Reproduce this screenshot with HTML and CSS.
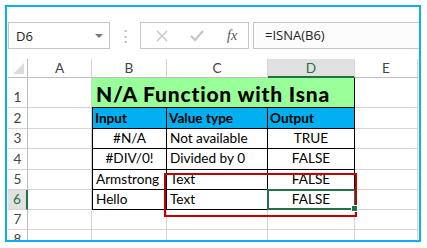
FILE: index.html
```html
<!DOCTYPE html>
<html lang="en">
<head>
    <meta charset="UTF-8">
    <title>ISNA</title>
    <link rel="stylesheet" href="styles.css">
</head>
<body>
    <div class="frame">
        <div class="toolbar">
            <div class="namebox">
                <span>D6</span>
                <span class="caret"></span>
            </div>
            <div class="dots">⋮</div>
            <div class="buttons">
                <svg width="14" height="14" viewBox="0 0 14 14"><path d="M2 2 L12 12 M12 2 L2 12" stroke="#c4c4c4" stroke-width="1.4" fill="none"/></svg>
                <svg width="16" height="14" viewBox="0 0 16 14"><path d="M2 7 L6 11 L14 2" stroke="#c4c4c4" stroke-width="2" fill="none"/></svg>
                <span class="fx">fx</span>
            </div>
            <div class="formula">=ISNA(B6)</div>
        </div>

        <div class="sheet">
            <div class="corner"><span class="tri"></span></div>
            <div class="colhead">A</div>
            <div class="colhead">B</div>
            <div class="colhead">C</div>
            <div class="colhead active">D</div>
            <div class="colhead">E</div>

            <div class="rowhead r1">1</div>
            <div class="cell"></div>
            <div class="cell title">N/A Function with Isna</div>
            <div class="cell"></div>

            <div class="rowhead r2">2</div>
            <div class="cell"></div>
            <div class="cell head bl">Input</div>
            <div class="cell head">Value type</div>
            <div class="cell head">Output</div>
            <div class="cell"></div>

            <div class="rowhead">3</div>
            <div class="cell"></div>
            <div class="cell data bl center">#N/A</div>
            <div class="cell data">Not available</div>
            <div class="cell data center">TRUE</div>
            <div class="cell"></div>

            <div class="rowhead r4">4</div>
            <div class="cell"></div>
            <div class="cell data bl center">#DIV/0!</div>
            <div class="cell data">Divided by 0</div>
            <div class="cell data center">FALSE</div>
            <div class="cell"></div>

            <div class="rowhead">5</div>
            <div class="cell"></div>
            <div class="cell data bl">Armstrong</div>
            <div class="cell data">Text</div>
            <div class="cell data center">FALSE</div>
            <div class="cell"></div>

            <div class="rowhead active">6</div>
            <div class="cell"></div>
            <div class="cell data bl">Hello</div>
            <div class="cell data">Text</div>
            <div class="cell data center selected">FALSE<span class="handle"></span></div>
            <div class="cell"></div>

            <div class="rowhead">7</div>
            <div class="cell"></div>
            <div class="cell"></div>
            <div class="cell"></div>
            <div class="cell"></div>
            <div class="cell"></div>

            <div class="rowhead">8</div>
            <div class="cell"></div>
            <div class="cell"></div>
            <div class="cell"></div>
            <div class="cell"></div>
            <div class="cell"></div>

            <div class="redbox"></div>
        </div>
    </div>
</body>
</html>
```

FILE: styles.css
```css
body {
    margin: 0;
    background: #fff;
    font-family: Lato, 'Liberation Sans', sans-serif;
}

.frame {
    margin: 5px;
    width: 411px;
    height: 233px;
    border: 2px solid #0cb0ee;
    padding-left: 1px;
    box-sizing: content-box;
    overflow: hidden;
    background: #fff;
}

/* formula bar */
.toolbar {
    display: flex;
    height: 27px;
    margin-top: 15px;
}

.namebox {
    width: 102px;
    box-sizing: border-box;
    border: 1px solid #c6c6c6;
    display: flex;
    align-items: center;
    justify-content: space-between;
    padding: 0 6px 0 7px;
    font-family: 'Open Sans', sans-serif;
    font-size: 13px;
    color: #222;
}

.caret {
    width: 0;
    height: 0;
    border-left: 4px solid transparent;
    border-right: 4px solid transparent;
    border-top: 4px solid #777;
}

.dots {
    width: 30px;
    text-align: center;
    color: #b0b0b0;
    font-size: 15px;
    line-height: 27px;
}

.buttons {
    width: 109px;
    box-sizing: border-box;
    border: 1px solid #c6c6c6;
    display: flex;
    align-items: center;
    padding-left: 14px;
    gap: 20px;
}

.fx {
    font-family: 'Liberation Serif', serif;
    font-style: italic;
    font-size: 14px;
    color: #555;
    margin-left: 2px;
}

.formula {
    flex: 1;
    margin-left: 4px;
    border: 1px solid #c6c6c6;
    border-right: none;
    background: #fcfcfc;
    padding-left: 11px;
    font-family: 'Open Sans', sans-serif;
    font-size: 13px;
    line-height: 25px;
    color: #222;
}

/* grid */
.sheet {
    position: relative;
    margin-top: 10px;
    display: grid;
    grid-template-columns: 20px 64px 75px 101px 87px 63px;
    grid-template-rows: 19px 30px 21px 20px 21px 20px 20px 20px 20px;
    font-size: 13.6px;
    color: #000;
}

.corner,
.colhead,
.rowhead,
.cell {
    box-sizing: border-box;
    border-right: 1px solid #d4d4d4;
    border-bottom: 1px solid #d4d4d4;
}

.corner {
    position: relative;
    border-right-color: #bdbdbd;
    border-bottom-color: #bdbdbd;
}

.tri {
    position: absolute;
    right: 3px;
    bottom: 3px;
    width: 0;
    height: 0;
    border-left: 11px solid transparent;
    border-bottom: 11px solid #dcdcdc;
}

.colhead {
    text-align: center;
    color: #444;
    line-height: 18px;
    border-bottom-color: #bdbdbd;
}

.colhead.active {
    background: #e1e1e1;
    color: #217346;
    border-bottom: 2px solid #217346;
}

.rowhead {
    text-align: center;
    color: #444;
    line-height: 19px;
    display: flex;
    align-items: flex-end;
    justify-content: center;
    border-right-color: #bdbdbd;
}

.rowhead.active {
    background: #e1e1e1;
    color: #217346;
    border-right: 2px solid #217346;
}

.title {
    grid-column: span 3;
    background: #99ff99;
    border-right: 1px solid #000;
    border-bottom: 1px solid #000;
    font-weight: 900;
    font-size: 21px;
    line-height: 31px;
    padding-left: 4px;
    letter-spacing: 0.8px;
}

.head {
    background: #00b0f0;
    font-weight: 700;
    border-right: 1px solid #000;
    border-bottom: 1px solid #000;
    padding-left: 2px;
    line-height: 20px;
}

.data {
    border-right: 1px solid #000;
    border-bottom: 1px solid #000;
    padding-left: 3px;
    line-height: 19px;
    position: relative;
}

.bl {
    border-left: 1px solid #000;
}

.center {
    text-align: center;
    padding-left: 0;
}

.selected::after {
    content: '';
    position: absolute;
    left: -1px;
    top: -1px;
    right: -2px;
    bottom: -1px;
    border: 2px solid #217346;
}

.handle {
    position: absolute;
    right: -4px;
    bottom: -3px;
    width: 5px;
    height: 5px;
    background: #217346;
    border: 1px solid #fff;
    z-index: 2;
}

.redbox {
    position: absolute;
    left: 156px;
    top: 114px;
    width: 193px;
    height: 44px;
    box-sizing: border-box;
    border: 2px solid #c00000;
}
```
